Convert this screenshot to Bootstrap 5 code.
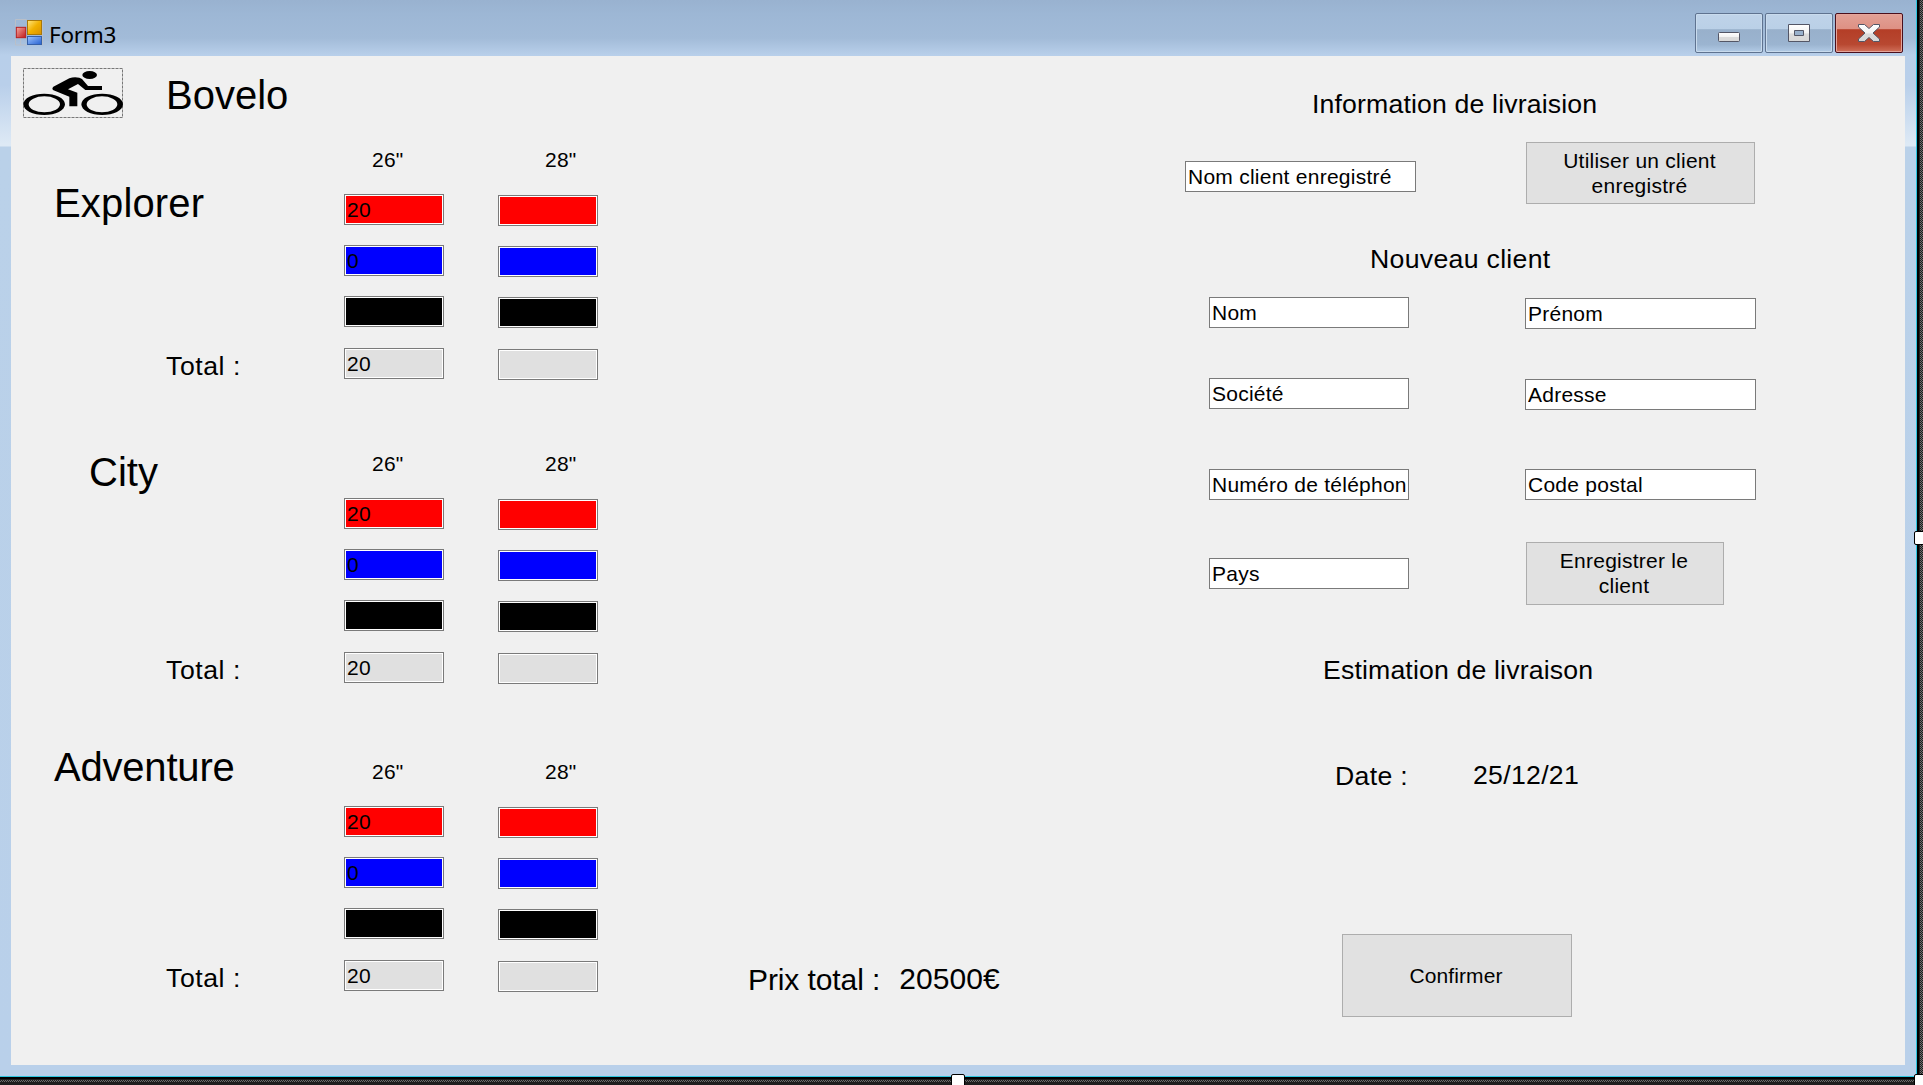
<!DOCTYPE html>
<html lang="fr">
<head>
<meta charset="utf-8">
<meta name="viewport" content="width=device-width, initial-scale=1">
<title>Form3</title>
<link href="https://cdn.jsdelivr.net/npm/bootstrap@5.3.0/dist/css/bootstrap.min.css" rel="stylesheet">
<style>
  body { width: 1923px; height: 1085px; overflow: hidden; background: #1e1e1e; color: #000; font-family: "Liberation Sans", Arial, sans-serif; font-size: 21px; letter-spacing: .2px; line-height: 25px; }
  .designer { width: 1923px; height: 1085px; background-color: #1e1e1e; }
  .dither { background: conic-gradient(#6c6c6c 25%, #1e1e1e 0 50%, #6c6c6c 0 75%, #1e1e1e 0) 0 0 / 2px 2px; }
  .dither-r { left: 1920px; top: 0; width: 3px; height: 1074px; }
  .dither-b { left: 0; top: 1080px; width: 1914px; height: 2px; }
  .window-frame { width: 1919px; height: 1079px; border-right: 2px solid #000; border-bottom: 2px solid #000; }
  .window-inner { width: 1917px; height: 1077px; border-right: 1px solid #2cc6e0; border-bottom: 1px solid #2cc6e0; padding: 0 11px 11px 11px;
    background: linear-gradient(#99b2d0 0, #9db7d5 14px, #a2bbd8 38px, #b8cfea 55px, #b9cfea 85px, #dde9f5 144px, #dde9f5 146px, #bad1e9 147px, #b9d0ea 100%); }
  .titlebar { height: 56px; padding-left: 4px; padding-right: 2px; }
  .title-icon { margin-top: 19px; width: 28px; height: 27px; }
  .title-text { font-family: "Noto Sans", "Open Sans", sans-serif; font-size: 22.5px; letter-spacing: -.3px; line-height: 30px; margin: 20px 0 0 6px; }
  .win-btns { margin-top: 13px; gap: 2px; }
  .win-btn { width: 68px; height: 40px; border: 1px solid #5f7390; border-radius: 2px; box-shadow: inset 0 0 0 1px #c9dbed;
    background: linear-gradient(#bfd3e9 0, #bad0e7 40%, #98b0cb 41%, #9bb4d0 80%, #b2cbe6 100%); }
  .win-close { border-color: #4a0f1c; box-shadow: inset 0 0 0 1px #e4a59b; background: linear-gradient(#e2a196 0, #de9083 40%, #b43e27 41%, #b84831 80%, #d0705a 100%); }
  .client { width: 1894px; height: 1009px; background: #f0f0f0; }
  .orders { width: 738px; }
  .brand { height: 84px; padding: 12px 0 0 12px; }
  .brand svg { width: 100px; height: 50px; }
  .heading-xl { font-size: 40px; line-height: 46px; letter-spacing: 0; white-space: pre; }
  .heading-md { font-size: 26.67px; line-height: 30px; letter-spacing: .15px; white-space: pre; }
  .heading-lg { font-size: 30px; line-height: 34px; letter-spacing: -.1px; white-space: pre; }
  .brand-name { margin: 4px 0 0 43px; }
  .model { height: 304px; }
  .model-last { height: 257px; }
  .model-side { width: 333px; }
  .model-side .heading-md { margin-left: 155px; letter-spacing: .55px; }
  .model + .model-tall { height: 308px; }
  .size-col { width: 100px; }
  .size-label { height: 25px; padding-left: 28px; margin-top: 7px; }
  .size-26 { margin-right: 54px; }
  .size-26 .size-label { margin-bottom: 22px; }
  .size-28 .size-label { padding-left: 47px; margin-bottom: 23px; }
  .field { height: 31px; padding: 0 0 0 2px; border: 1px solid #7a7a7a; border-radius: 0; color: #000; font-size: 21px; letter-spacing: .25px; line-height: 27px; background: #fff; }
  .qty { margin-bottom: 20px; box-shadow: inset 0 0 0 1px #fff; letter-spacing: .3px; }
  .qty-red { background: #f00; } .qty-blue { background: #00f; }
  .qty-black { background: #000; margin-bottom: 21px; } .qty-sum { background: #e0e0e0; margin-bottom: 0; }
  .price { width: 436px; padding-bottom: 68px; }
  .delivery { width: 571px; }
  .w231 { width: 231px; } .w200 { width: 200px; }
  .ml24 { margin-left: 24px; }
  .form-btn { border: 1px solid #adadad; border-radius: 0; background: #e1e1e1; color: #000; font-size: 21px; letter-spacing: .25px; line-height: 25px; padding: 0; }
  .btn-use { width: 229px; height: 62px; margin-right: 1px; padding: 0 2px 1px 0; }
  .btn-save { width: 198px; height: 63px; margin-right: 32px; padding: 0 2px 1px 0; }
  .btn-ok { width: 230px; height: 83px; margin-left: 157px; padding-right: 2px; letter-spacing: .1px; }
  .grip { width: 14px; height: 14px; background: #fff; border: 1px solid #000; border-radius: 2px; }
  .grip-r { left: 1914px; top: 531px; } .grip-b { left: 951px; top: 1074px; } .grip-c { left: 1914px; top: 1074px; }
  .t-explorer { margin: 40px 0 125px 43px; letter-spacing: .15px; }
  .t-city { margin: 5px 0 160px 78px; }
  .t-adventure { margin: -8px 0 173px 43px; letter-spacing: -.2px; }
</style>
</head>
<body>
<div class="designer position-relative overflow-hidden">
  <div class="dither dither-r position-absolute"></div>
  <div class="dither dither-b position-absolute"></div>
  <div class="window-frame">
    <div class="window-inner">
      <header class="titlebar d-flex align-items-start">
        <svg class="title-icon" viewBox="45 57 84 81">
          <defs>
            <linearGradient id="y" x2="1" y2="1"><stop stop-color="#ffe680"/><stop offset=".5" stop-color="#f0b000"/><stop offset="1" stop-color="#d89000"/></linearGradient>
            <linearGradient id="r" x2="1" y2="1"><stop stop-color="#f5a8a0"/><stop offset="1" stop-color="#c01818"/></linearGradient>
            <linearGradient id="b" x2="1" y2="1"><stop stop-color="#9cc4ff"/><stop offset="1" stop-color="#2560d0"/></linearGradient>
          </defs>
          <path d="M46.500 80V58.500H80M46.500 114v21H80M62 114v21M127.500 60v76" fill="none" stroke="#b9bfc8" stroke-width="3"/>
          <rect x="49" y="82" width="28" height="31" fill="url(#r)" stroke="#b82020" stroke-width="3"/>
          <rect x="82.500" y="61.500" width="42" height="42" fill="url(#y)" stroke="#a87808" stroke-width="3"/>
          <rect x="82.500" y="109.500" width="42" height="24" fill="url(#b)" stroke="#3560a8" stroke-width="3"/>
        </svg>
        <span class="title-text">Form3</span>
        <div class="win-btns d-flex ms-auto">
          <div class="win-btn"><svg width="66" height="38"><defs><linearGradient id="g" x2="0" y2="1"><stop stop-color="#fff"/><stop offset=".5" stop-color="#f2f2f2"/><stop offset=".55" stop-color="#dcdcdc"/><stop offset="1" stop-color="#d8d8d8"/></linearGradient></defs><rect x="22.500" y="18.500" width="21" height="9" rx="1" fill="url(#g)" stroke="#535666"/></svg></div>
          <div class="win-btn"><svg width="66" height="38"><path d="M22.500 10.500h21v17h-21zM28.500 16.500v5h9v-5z" fill="url(#g)" fill-rule="evenodd" stroke="#535666" stroke-linejoin="round"/></svg></div>
          <div class="win-btn win-close"><svg width="66" height="38"><path d="M22.500 10.500h6l4.500 4 4.500-4h6v2.500l-6.500 6 6.500 6v2.500h-6l-4.500-4-4.500 4h-6V25l6.500-6-6.500-6z" fill="url(#g)" stroke="#535666" stroke-linejoin="round"/></svg></div>
        </div>
      </header>
      <main class="client d-flex">
        <section class="orders">
          <div class="brand d-flex">
            <svg viewBox="69 204 300 150">
              <rect x="70.500" y="205.500" width="297" height="147" fill="none" stroke="#777" stroke-width="3" stroke-dasharray="9 3"/>
              <path fill-rule="evenodd" d="M70 313a62.500 32 0 0 1 125 0a62.500 32 0 0 1-125 0zM86 313a47 24 0 0 0 94 0a47 24 0 0 0-94 0zM244 313a62.500 32 0 0 1 125 0a62.500 32 0 0 1-125 0zM260 313a46 24 0 0 0 92 0a46 24 0 0 0-92 0z"/>
              <ellipse cx="269" cy="225" rx="22" ry="12"/>
              <path d="M160 260L208 235Q222 229 238 233L246 237L264 258H306V270H256L234 252L204 268L232 278V319H208V290L166 273Q152 268 160 260z"/>
            </svg>
            <div class="heading-xl brand-name">Bovelo</div>
          </div>
          <div class="model d-flex">
            <div class="model-side">
              <div class="heading-xl t-explorer">Explorer</div>
              <div class="heading-md">Total :</div>
            </div>
            <div class="size-col size-26">
              <div class="size-label">26"</div>
              <input class="form-control field qty qty-red" value="20"><input class="form-control field qty qty-blue" value="0"><input class="form-control field qty qty-black"><input class="form-control field qty qty-sum" value="20">
            </div>
            <div class="size-col size-28">
              <div class="size-label">28"</div>
              <input class="form-control field qty qty-red"><input class="form-control field qty qty-blue"><input class="form-control field qty qty-black"><input class="form-control field qty qty-sum">
            </div>
          </div>
          <div class="model model-tall d-flex">
            <div class="model-side">
              <div class="heading-xl t-city">City</div>
              <div class="heading-md">Total :</div>
            </div>
            <div class="size-col size-26">
              <div class="size-label">26"</div>
              <input class="form-control field qty qty-red" value="20"><input class="form-control field qty qty-blue" value="0"><input class="form-control field qty qty-black"><input class="form-control field qty qty-sum" value="20">
            </div>
            <div class="size-col size-28">
              <div class="size-label">28"</div>
              <input class="form-control field qty qty-red"><input class="form-control field qty qty-blue"><input class="form-control field qty qty-black"><input class="form-control field qty qty-sum">
            </div>
          </div>
          <div class="model-last d-flex">
            <div class="model-side">
              <div class="heading-xl t-adventure">Adventure</div>
              <div class="heading-md">Total :</div>
            </div>
            <div class="size-col size-26">
              <div class="size-label">26"</div>
              <input class="form-control field qty qty-red" value="20"><input class="form-control field qty qty-blue" value="0"><input class="form-control field qty qty-black"><input class="form-control field qty qty-sum" value="20">
            </div>
            <div class="size-col size-28">
              <div class="size-label">28"</div>
              <input class="form-control field qty qty-red"><input class="form-control field qty qty-blue"><input class="form-control field qty qty-black"><input class="form-control field qty qty-sum">
            </div>
          </div>
        </section>
        <section class="price d-flex align-items-end">
          <span class="heading-lg" style="margin-left:-1px">Prix total :</span>
          <span class="heading-lg" style="margin:0 0 1px 19px;letter-spacing:.1px">20500€</span>
        </section>
        <section class="delivery">
          <div class="heading-md" style="margin:33px 0 0 127px">Information de livraision</div>
          <div class="d-flex justify-content-between" style="margin-top:23px">
            <input class="form-control field w231" style="margin-top:19px" value="Nom client enregistré">
            <button class="btn form-btn btn-use">Utiliser un client<br>enregistré</button>
          </div>
          <div class="heading-md" style="margin:40px 0 0 185px;letter-spacing:.3px">Nouveau client</div>
          <div class="d-flex justify-content-between ml24" style="margin-top:23px">
            <input class="form-control field w200" value="Nom">
            <input class="form-control field w231" style="margin-top:1px" value="Prénom">
          </div>
          <div class="d-flex justify-content-between ml24" style="margin-top:49px">
            <input class="form-control field w200" value="Société">
            <input class="form-control field w231" style="margin-top:1px" value="Adresse">
          </div>
          <div class="d-flex justify-content-between ml24" style="margin-top:59px">
            <input class="form-control field w200" value="Numéro de téléphon">
            <input class="form-control field w231" value="Code postal">
          </div>
          <div class="d-flex justify-content-between ml24" style="margin-top:42px">
            <input class="form-control field w200" style="margin-top:16px" value="Pays">
            <button class="btn form-btn btn-save">Enregistrer le<br>client</button>
          </div>
          <div class="heading-md" style="margin:50px 0 0 138px">Estimation de livraison</div>
          <div class="d-flex" style="margin:75px 0 0 150px">
            <div class="heading-md" style="margin-top:1px;letter-spacing:.3px">Date :</div>
            <div class="heading-md" style="margin-left:65px;letter-spacing:.3px">25/12/21</div>
          </div>
          <button class="btn form-btn btn-ok" style="margin-top:143px">Confirmer</button>
        </section>
      </main>
    </div>
  </div>
  <div class="grip grip-r position-absolute"></div>
  <div class="grip grip-b position-absolute"></div>
  <div class="grip grip-c position-absolute"></div>
</div>
<script src="https://cdn.jsdelivr.net/npm/bootstrap@5.3.0/dist/js/bootstrap.bundle.min.js"></script>
</body>
</html>
